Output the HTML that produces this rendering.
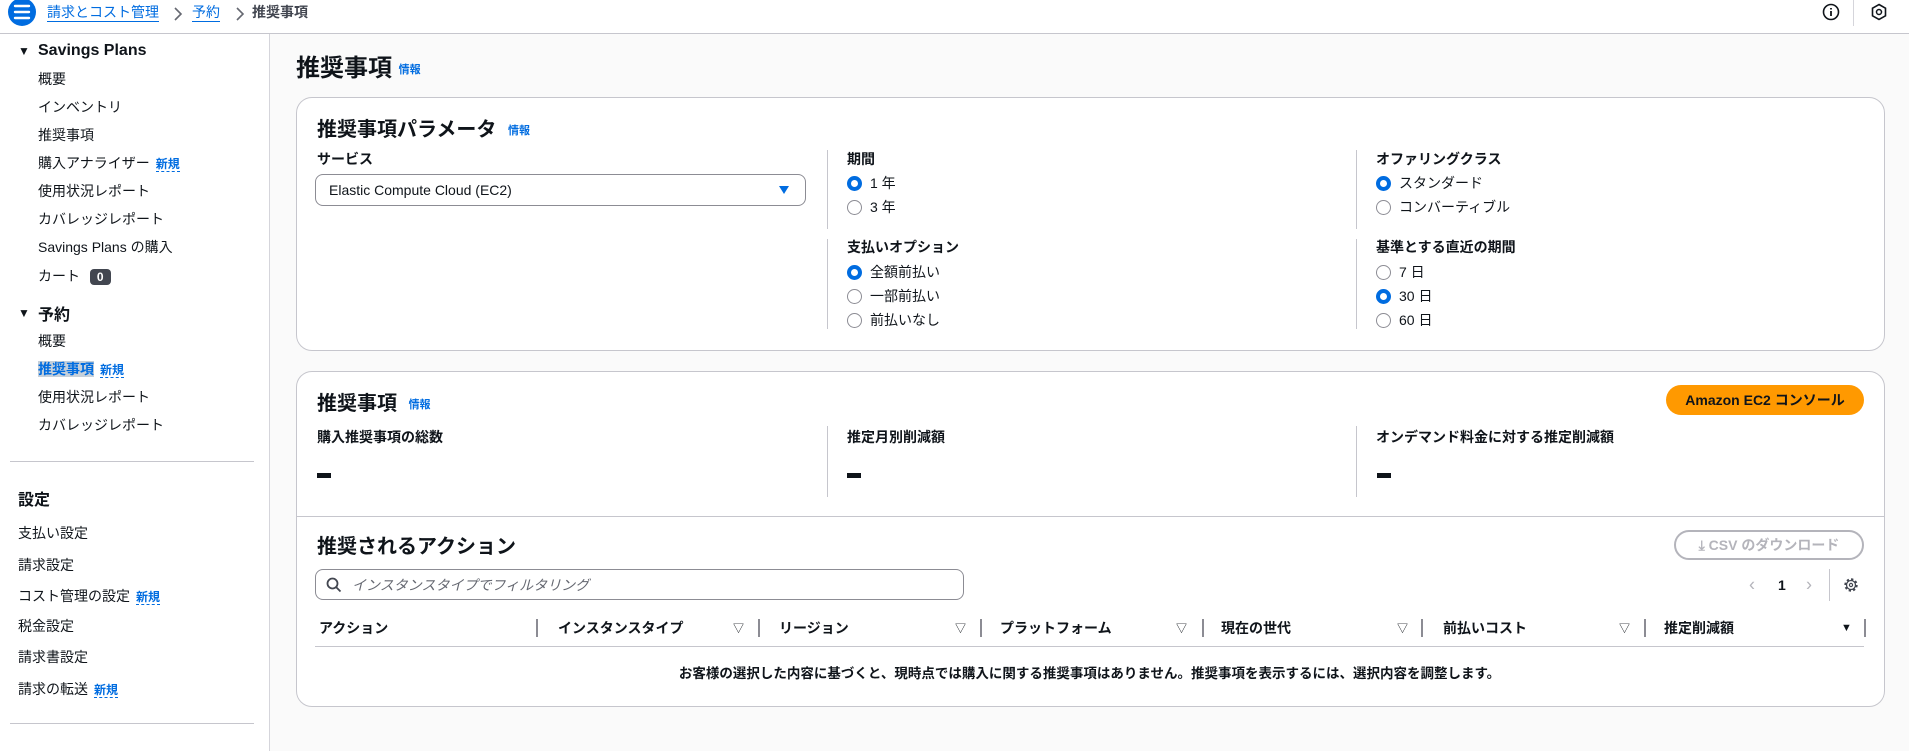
<!DOCTYPE html>
<html><head><meta charset="utf-8"><style>
*{box-sizing:border-box;margin:0;padding:0}
body{width:1909px;height:751px;overflow:hidden;background:#fafafa;font-family:"Liberation Sans","Noto Sans CJK JP",sans-serif;color:#0f141a;position:relative}
.a{position:absolute;white-space:nowrap}
.hdr{position:absolute;left:0;top:0;width:1909px;height:34px;background:#fff;border-bottom:1px solid #c6c6cd}
.side{position:absolute;left:0;top:34px;width:270px;height:717px;background:#fff;border-right:1px solid #d5d5db}
.si{font-size:14px;color:#0f141a;transform:translateY(-50%)}
.sh{font-size:16px;font-weight:bold;transform:translateY(-50%)}
.new{color:#006ce0;font-weight:bold;font-size:12px;border-bottom:1px dashed #006ce0;margin-left:6px}
.link{color:#006ce0;font-weight:bold;font-size:11px}
.panel{position:absolute;left:296px;width:1589px;background:#fff;border:1px solid #c6c6cd;border-radius:16px}
.lbl{font-size:14px;font-weight:bold;transform:translateY(-50%)}
.rt{font-size:14px;transform:translateY(-50%)}
.rad{display:inline-block;width:15px;height:15px;border-radius:50%;border:1.5px solid #8c8c94;vertical-align:-3px;margin-right:8px;background:#fff}
.rad.on{border:4.5px solid #006ce0}
.vd{position:absolute;width:1px;background:#c6c6cd}
.th{font-size:14px;font-weight:bold;transform:translateY(-50%)}
.tri{font-size:11px;transform:translateY(-50%)}
.sep{position:absolute;width:2px;height:18px;background:#8c8c94;top:619px}
</style></head><body>
<div class="hdr"></div>
<svg class="a" style="left:8px;top:-2px" width="28" height="28"><circle cx="14" cy="14" r="14" fill="#006ce0"/><path d="M7 8h14M7 14h14M7 20h14" stroke="#fff" stroke-width="2.4" stroke-linecap="round"/></svg>
<div class="a" style="left:47px;top:3px;font-size:14px;color:#006ce0;border-bottom:1px solid #006ce0;line-height:18px">請求とコスト管理</div>
<svg class="a" style="left:172px;top:6px" width="12" height="16"><path d="M3 2l6 6-6 6" stroke="#656871" stroke-width="1.6" fill="none"/></svg>
<div class="a" style="left:192px;top:3px;font-size:14px;color:#006ce0;border-bottom:1px solid #006ce0;line-height:18px">予約</div>
<svg class="a" style="left:234px;top:6px" width="12" height="16"><path d="M3 2l6 6-6 6" stroke="#656871" stroke-width="1.6" fill="none"/></svg>
<div class="a" style="left:252px;top:3px;font-size:14px;color:#424650;font-weight:bold;line-height:18px">推奨事項</div>
<svg class="a" style="left:1822px;top:3px" width="18" height="18"><circle cx="9" cy="9" r="7.5" stroke="#0f141a" stroke-width="1.6" fill="none"/><path d="M9 8v5M9 5v1.5" stroke="#0f141a" stroke-width="1.8"/></svg>
<div class="a" style="left:1853px;top:0;width:1px;height:26px;background:#d5d5db"></div>
<svg class="a" style="left:1870px;top:3px" width="18" height="18"><path d="M9 1.5l6.5 3.7v7.6L9 16.5 2.5 12.8V5.2z" stroke="#0f141a" stroke-width="1.6" fill="none"/><circle cx="9" cy="9" r="2.5" stroke="#0f141a" stroke-width="1.5" fill="none"/></svg>

<div class="side"></div>
<div class="a" style="left:18px;top:44px;font-size:12px">▼</div>
<div class="a sh" style="left:38px;top:51px">Savings Plans</div>
<div class="a si" style="left:38px;top:79px">概要</div>
<div class="a si" style="left:38px;top:107px">インベントリ</div>
<div class="a si" style="left:38px;top:135px">推奨事項</div>
<div class="a si" style="left:38px;top:163px">購入アナライザー<span class="new">新規</span></div>
<div class="a si" style="left:38px;top:191px">使用状況レポート</div>
<div class="a si" style="left:38px;top:219px">カバレッジレポート</div>
<div class="a si" style="left:38px;top:247px">Savings Plans の購入</div>
<div class="a si" style="left:38px;top:276px">カート <span style="display:inline-block;background:#424650;color:#fff;font-size:12px;font-weight:bold;padding:1px 7px;border-radius:4px;margin-left:6px">0</span></div>
<div class="a" style="left:18px;top:306px;font-size:12px">▼</div>
<div class="a sh" style="left:38px;top:313px">予約</div>
<div class="a si" style="left:38px;top:341px">概要</div>
<div class="a si" style="left:38px;top:369px"><span style="background:#c6d0da;color:#006ce0;font-weight:bold">推奨事項</span><span class="new">新規</span></div>
<div class="a si" style="left:38px;top:397px">使用状況レポート</div>
<div class="a si" style="left:38px;top:425px">カバレッジレポート</div>
<div class="a" style="left:10px;top:461px;width:244px;height:1px;background:#c6c6cd"></div>
<div class="a sh" style="left:18px;top:498px">設定</div>
<div class="a si" style="left:18px;top:533px">支払い設定</div>
<div class="a si" style="left:18px;top:565px">請求設定</div>
<div class="a si" style="left:18px;top:596px">コスト管理の設定<span class="new">新規</span></div>
<div class="a si" style="left:18px;top:626px">税金設定</div>
<div class="a si" style="left:18px;top:657px">請求書設定</div>
<div class="a si" style="left:18px;top:689px">請求の転送<span class="new">新規</span></div>
<div class="a" style="left:10px;top:723px;width:244px;height:1px;background:#c6c6cd"></div>

<div class="a" style="left:296px;top:48px;font-size:24px;font-weight:bold">推奨事項 <span class="link" style="vertical-align:3px">情報</span></div>

<div class="panel" style="top:97px;height:254px"></div>
<div class="a" style="left:317px;top:113px;font-size:20px;font-weight:bold">推奨事項パラメータ <span class="link" style="margin-left:6px;vertical-align:2px">情報</span></div>
<div class="a lbl" style="left:317px;top:159px">サービス</div>
<div class="a" style="left:315px;top:174px;width:491px;height:32px;border:1px solid #8c8c94;border-radius:8px;background:#fff"></div>
<div class="a rt" style="left:329px;top:190px">Elastic Compute Cloud (EC2)</div>
<svg class="a" style="left:778px;top:185px" width="12" height="10"><path d="M1 1h10L6 9z" fill="#006ce0"/></svg>
<div class="vd" style="left:827px;top:150px;height:79px"></div>
<div class="vd" style="left:827px;top:239px;height:90px"></div>
<div class="vd" style="left:1356px;top:150px;height:79px"></div>
<div class="vd" style="left:1356px;top:239px;height:90px"></div>
<div class="a lbl" style="left:847px;top:159px">期間</div>
<div class="a rt" style="left:847px;top:183px"><span class="rad on"></span>1 年</div>
<div class="a rt" style="left:847px;top:207px"><span class="rad"></span>3 年</div>
<div class="a lbl" style="left:847px;top:247px">支払いオプション</div>
<div class="a rt" style="left:847px;top:272px"><span class="rad on"></span>全額前払い</div>
<div class="a rt" style="left:847px;top:296px"><span class="rad"></span>一部前払い</div>
<div class="a rt" style="left:847px;top:320px"><span class="rad"></span>前払いなし</div>
<div class="a lbl" style="left:1376px;top:159px">オファリングクラス</div>
<div class="a rt" style="left:1376px;top:183px"><span class="rad on"></span>スタンダード</div>
<div class="a rt" style="left:1376px;top:207px"><span class="rad"></span>コンバーティブル</div>
<div class="a lbl" style="left:1376px;top:247px">基準とする直近の期間</div>
<div class="a rt" style="left:1376px;top:272px"><span class="rad"></span>7 日</div>
<div class="a rt" style="left:1376px;top:296px"><span class="rad on"></span>30 日</div>
<div class="a rt" style="left:1376px;top:320px"><span class="rad"></span>60 日</div>

<div class="panel" style="top:371px;height:336px"></div>
<div class="a" style="left:317px;top:387px;font-size:20px;font-weight:bold">推奨事項 <span class="link" style="margin-left:6px;vertical-align:2px">情報</span></div>
<div class="a" style="left:1666px;top:385px;width:198px;height:30px;border-radius:15px;background:#ff9900;font-size:14px;font-weight:bold;text-align:center;line-height:30px">Amazon EC2 コンソール</div>
<div class="a lbl" style="left:317px;top:437px">購入推奨事項の総数</div>
<div class="a lbl" style="left:847px;top:437px">推定月別削減額</div>
<div class="a lbl" style="left:1376px;top:437px">オンデマンド料金に対する推定削減額</div>
<div class="vd" style="left:827px;top:426px;height:71px"></div>
<div class="vd" style="left:1356px;top:426px;height:71px"></div>
<div class="a" style="left:317px;top:473px;width:14px;height:5px;background:#0f141a"></div>
<div class="a" style="left:847px;top:473px;width:14px;height:5px;background:#0f141a"></div>
<div class="a" style="left:1377px;top:473px;width:14px;height:5px;background:#0f141a"></div>
<div class="a" style="left:297px;top:516px;width:1587px;height:1px;background:#c6c6cd"></div>
<div class="a" style="left:317px;top:530px;font-size:20px;font-weight:bold">推奨されるアクション</div>
<div class="a" style="left:1674px;top:530px;width:190px;height:30px;border:2px solid #b4b4bb;border-radius:15px;color:#b4b4bb;font-size:14px;font-weight:bold;text-align:center;line-height:26px">⤓ CSV のダウンロード</div>
<div class="a" style="left:315px;top:569px;width:649px;height:31px;border:1px solid #8c8c94;border-radius:8px;background:#fff"></div>
<svg class="a" style="left:326px;top:577px" width="16" height="16"><circle cx="6.5" cy="6.5" r="5" stroke="#424650" stroke-width="1.8" fill="none"/><path d="M10 10l4.5 4.5" stroke="#424650" stroke-width="1.8"/></svg>
<div class="a rt" style="left:352px;top:585px;font-style:italic;color:#656871">インスタンスタイプでフィルタリング</div>
<div class="a rt" style="left:1749px;top:585px;color:#b4b4bb;font-size:18px">‹</div>
<div class="a rt" style="left:1778px;top:585px;font-weight:bold">1</div>
<div class="a rt" style="left:1806px;top:585px;color:#b4b4bb;font-size:18px">›</div>
<div class="vd" style="left:1829px;top:569px;height:32px"></div>
<svg class="a" style="left:1843px;top:577px" width="16" height="16"><circle cx="8" cy="8" r="5.5" stroke="#424650" stroke-width="2.4" stroke-dasharray="2.2 2.1" fill="none"/><circle cx="8" cy="8" r="4.5" stroke="#424650" stroke-width="1.3" fill="none"/><circle cx="8" cy="8" r="1.6" stroke="#424650" stroke-width="1.2" fill="none"/></svg>
<div class="a th" style="left:319px;top:628px">アクション</div>
<div class="sep" style="left:536px"></div>
<div class="a th" style="left:558px;top:628px">インスタンスタイプ</div><div class="a tri" style="left:733px;top:628px">▽</div>
<div class="sep" style="left:758px"></div>
<div class="a th" style="left:779px;top:628px">リージョン</div><div class="a tri" style="left:955px;top:628px">▽</div>
<div class="sep" style="left:980px"></div>
<div class="a th" style="left:1000px;top:628px">プラットフォーム</div><div class="a tri" style="left:1176px;top:628px">▽</div>
<div class="sep" style="left:1202px"></div>
<div class="a th" style="left:1221px;top:628px">現在の世代</div><div class="a tri" style="left:1397px;top:628px">▽</div>
<div class="sep" style="left:1421px"></div>
<div class="a th" style="left:1443px;top:628px">前払いコスト</div><div class="a tri" style="left:1619px;top:628px">▽</div>
<div class="sep" style="left:1644px"></div>
<div class="a th" style="left:1664px;top:628px">推定削減額</div><div class="a tri" style="left:1841px;top:628px">▼</div>
<div class="sep" style="left:1864px"></div>
<div class="a" style="left:315px;top:646px;width:1549px;height:1px;background:#c6c6cd"></div>
<div class="a lbl" style="left:315px;width:1549px;text-align:center;top:672px;font-size:13.5px">お客様の選択した内容に基づくと、現時点では購入に関する推奨事項はありません。推奨事項を表示するには、選択内容を調整します。</div>
</body></html>
